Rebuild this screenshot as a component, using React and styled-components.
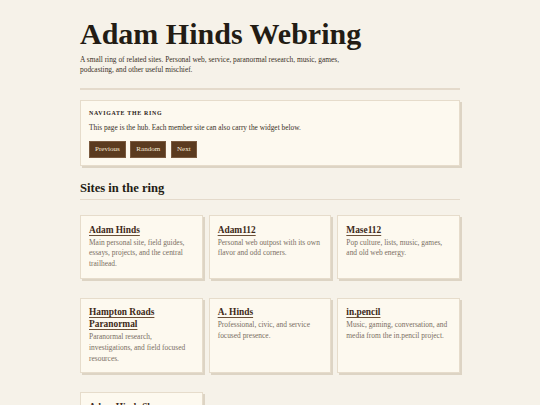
import React from 'react';
import styled, { createGlobalStyle } from 'styled-components';

const Global = createGlobalStyle`
  html, body { margin: 0; padding: 0; background: #f6f2e9; }
  body { font-family: "Liberation Serif", "DejaVu Serif", serif; color: #2a2118; }
  *, *::before, *::after { box-sizing: border-box; }
`;

const Page = styled.main`
  max-width: 380px;
  margin: 0 auto;
  padding: 17px 0 24px;
`;

const Header = styled.header`
  padding-bottom: 12.7px;
  border-bottom: 2px solid #e4dacb;
  margin-bottom: 10px;
`;

const Title = styled.h1`
  margin: 0 0 4.6px;
  font-size: 30px;
  line-height: 33px;
  font-weight: 700;
  color: #231c14;
`;

const Lead = styled.p`
  margin: 0;
  max-width: 285px;
  font-size: 7.4px;
  line-height: 10.5px;
  color: #3b3128;
`;

const Panel = styled.section`
  background: #fdf9ef;
  border: 1px solid #e6dccb;
  box-shadow: 2px 2px 0 #ddd4c4;
`;

const NavBox = styled(Panel)`
  padding: 7.5px 8px 7px;
`;

const Eyebrow = styled.h2`
  margin: 0;
  font-size: 5.9px;
  line-height: 8px;
  font-weight: 700;
  letter-spacing: 0.12em;
  text-transform: uppercase;
  color: #2a2118;
`;

const NavText = styled.p`
  margin: 6.3px 0 7px;
  font-size: 7.35px;
  line-height: 10.5px;
  color: #3b3128;
`;

const ButtonRow = styled.div`
  display: flex;
  gap: 4.5px;
`;

const Button = styled.a`
  display: inline-block;
  padding: 3px 5px;
  font-size: 7.1px;
  line-height: 9px;
  color: #f6ead8;
  background: #5b3b1f;
  border: 1px solid #7a5a3f;
  text-decoration: none;
`;

const SectionTitle = styled.h2`
  margin: 15px 0 15px;
  padding-bottom: 3px;
  font-size: 12.6px;
  line-height: 15.6px;
  font-weight: 700;
  color: #231c14;
  border-bottom: 1px solid #e4dacb;
`;

const Grid = styled.div`
  display: grid;
  grid-template-columns: repeat(3, 1fr);
  column-gap: 6px;
  row-gap: 19px;
`;

const Card = styled(Panel)`
  padding: 7.5px 8px 8px;
`;

const CardHead = styled.div`
  font-size: 9.4px;
  line-height: 12px;
`;

const CardTitle = styled.a`
  font-size: 9.4px;
  line-height: 12px;
  font-weight: 700;
  color: #3e2918;
  text-decoration: underline;
  text-decoration-thickness: 1px;
  text-underline-offset: 1.5px;
  text-decoration-color: #6b4f37;
`;

const CardText = styled.p`
  margin: 2px 0 0;
  font-size: 7.45px;
  line-height: 10.7px;
  color: #7a6f63;
`;

const sites = [
  { name: 'Adam Hinds', text: 'Main personal site, field guides, essays, projects, and the central trailhead.' },
  { name: 'Adam112', text: 'Personal web outpost with its own flavor and odd corners.' },
  { name: 'Mase112', text: 'Pop culture, lists, music, games, and old web energy.' },
  { name: 'Hampton Roads Paranormal', text: 'Paranormal research, investigations, and field focused resources.' },
  { name: 'A. Hinds', text: 'Professional, civic, and service focused presence.' },
  { name: 'in.pencil', text: 'Music, gaming, conversation, and media from the in.pencil project.' },
  { name: 'Adam Hinds Show', text: 'Conversations, stories, and episodes from the show.' },
];

export default function App() {
  return (
    <>
      <Global />
      <Page>
        <Header>
          <Title>Adam Hinds Webring</Title>
          <Lead>
            A small ring of related sites. Personal web, service, paranormal research, music, games,
            podcasting, and other useful mischief.
          </Lead>
        </Header>
        <NavBox>
          <Eyebrow>Navigate the ring</Eyebrow>
          <NavText>This page is the hub. Each member site can also carry the widget below.</NavText>
          <ButtonRow>
            <Button href="#">Previous</Button>
            <Button href="#">Random</Button>
            <Button href="#">Next</Button>
          </ButtonRow>
        </NavBox>
        <SectionTitle>Sites in the ring</SectionTitle>
        <Grid>
          {sites.map((s) => (
            <Card key={s.name}>
              <CardHead>
                <CardTitle href="#">{s.name}</CardTitle>
              </CardHead>
              <CardText>{s.text}</CardText>
            </Card>
          ))}
        </Grid>
      </Page>
    </>
  );
}
